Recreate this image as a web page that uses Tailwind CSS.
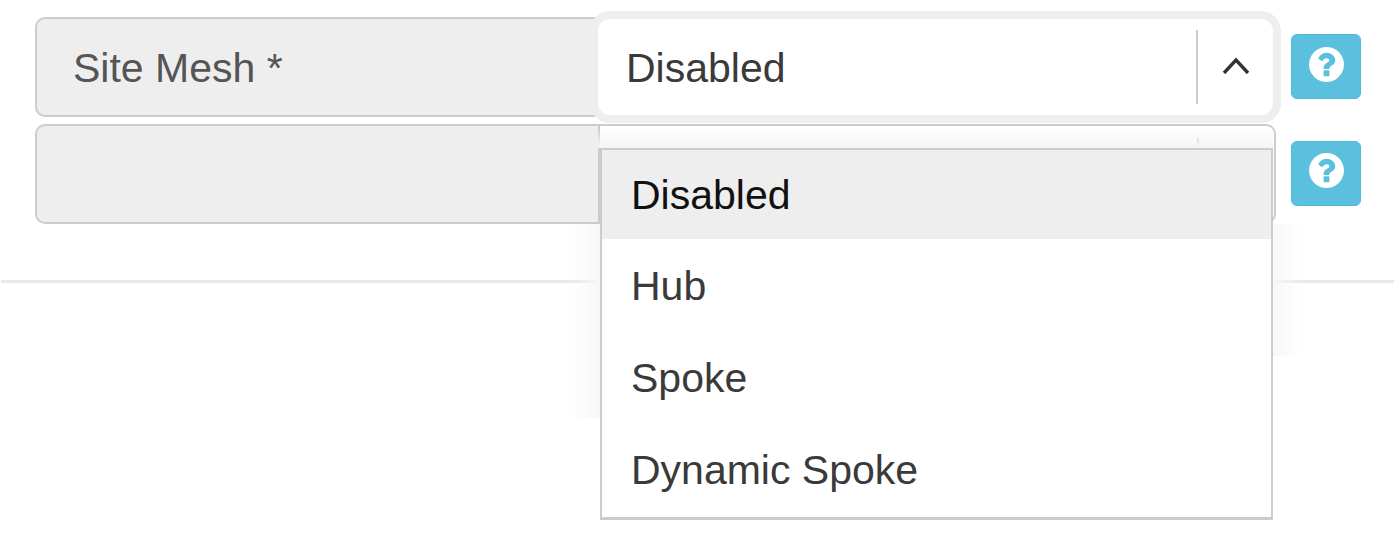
<!DOCTYPE html>
<html lang="en">
<head>
    <meta charset="UTF-8">
    <title>Site Mesh</title>
    <script src="https://cdn.jsdelivr.net/npm/@tailwindcss/browser@4"></script>
</head>
<body class="bg-white h-[556px] overflow-hidden font-['Liberation_Sans',Arial,sans-serif]">
    <div class="relative h-[556px]">
        <div class="pl-[35px] pt-[17px] flex flex-col gap-[7px]">
            <!-- site mesh row, select is focused -->
            <div class="flex items-start">
                <div class="w-[566px] h-[100px] shrink-0 bg-[#eeeeee] border-2 border-[#cccccc] rounded-l-[10px] pl-[36px] pt-[4px] flex items-center text-[41px] text-[#555555]">Site Mesh *</div>
                <div class="relative z-10 -ml-[3px] mt-[2px] w-[675px] h-[96px] shrink-0 bg-white rounded-[12px] ring-[8px] ring-[#eeeeee] flex items-center">
                    <span class="pl-[28px] pt-[4px] flex-1 text-[41px] text-[#3a3a3a]">Disabled</span>
                    <div class="w-[77px] h-[74px] -mt-[1px] pl-[1px] border-l-2 border-[#cccccc] flex items-center justify-center">
                        <svg class="w-[28px] h-[17px] -mt-[3px]" viewBox="0 0 28 17" fill="none" stroke="#333333" stroke-width="3.4"><path d="M2 16 L14 3 L26 16"/></svg>
                    </div>
                </div>
                <button class="ml-[18px] mt-[17px] w-[70px] h-[65px] bg-[#5bc0de] border border-[#4fb9d9] rounded-[6px] flex justify-center pt-[12px]">
                    <svg class="w-[35px] h-[35px]" viewBox="128 128 1536 1536" fill="#ffffff"><path d="M1024 1376v-192q0-14-9-23t-23-9h-192q-14 0-23 9t-9 23v192q0 14 9 23t23 9h192q14 0 23-9t9-23zm256-672q0-88-55.5-163t-138.5-116-170-41q-243 0-371 213-15 24 8 42l132 100q7 6 19 6 16 0 25-12 53-68 86-92 34-24 86-24 48 0 85.5 26t37.5 59q0 38-20 61t-68 45q-63 28-115.5 86.5t-52.5 125.5v36q0 14 9 23t23 9h192q14 0 23-9t9-23q0-19 21.5-49.5t54.5-49.5q32-18 49-28.5t46-35 44.5-48 28-60.5 12.5-81zm384 192q0 209-103 385.5t-279.5 279.5-385.5 103-385.5-103-279.5-279.5-103-385.5 103-385.5 279.5-279.5 385.5-103 385.5 103 279.5 279.5 103 385.5z"/></svg>
                </button>
            </div>
            <!-- second row, mostly covered by the menu -->
            <div class="flex items-start">
                <div class="w-[563px] h-[100px] shrink-0 bg-[#eeeeee] border-2 border-[#cccccc] border-r-0 rounded-l-[10px]"></div>
                <div class="w-[678px] h-[100px] shrink-0 bg-white border-2 border-[#cccccc] rounded-r-[10px] flex justify-end pt-[12px]">
                    <div class="w-[77px] h-[74px] border-l-2 border-[#cccccc]"></div>
                </div>
                <button class="ml-[15px] mt-[17px] w-[70px] h-[65px] bg-[#5bc0de] border border-[#4fb9d9] rounded-[6px] flex justify-center pt-[11px]">
                    <svg class="w-[35px] h-[35px]" viewBox="128 128 1536 1536" fill="#ffffff"><path d="M1024 1376v-192q0-14-9-23t-23-9h-192q-14 0-23 9t-9 23v192q0 14 9 23t23 9h192q14 0 23-9t9-23zm256-672q0-88-55.5-163t-138.5-116-170-41q-243 0-371 213-15 24 8 42l132 100q7 6 19 6 16 0 25-12 53-68 86-92 34-24 86-24 48 0 85.5 26t37.5 59q0 38-20 61t-68 45q-63 28-115.5 86.5t-52.5 125.5v36q0 14 9 23t23 9h192q14 0 23-9t9-23q0-19 21.5-49.5t54.5-49.5q32-18 49-28.5t46-35 44.5-48 28-60.5 12.5-81zm384 192q0 209-103 385.5t-279.5 279.5-385.5 103-385.5-103-279.5-279.5-103-385.5 103-385.5 279.5-279.5 385.5-103 385.5 103 279.5 279.5 103 385.5z"/></svg>
                </button>
            </div>
        </div>
        <div class="mt-[56px] ml-[1px] w-[1393px] h-[3px] bg-[#e9e9e9]"></div>

        <!-- faint menu shadow, cut off square like the reference -->
        <div class="absolute left-[572px] top-[224px] w-[28px] h-[194px] bg-gradient-to-l from-[#f7f7f7] to-white/0"></div>
        <div class="absolute left-[1272px] top-[224px] w-[30px] h-[132px] bg-gradient-to-r from-[#f7f7f7] to-white/0"></div>
        <div class="absolute left-[598px] top-[128px] w-[675px] h-[20px] bg-gradient-to-t from-[#f5f5f5] to-white/0"></div>

        <!-- open menu -->
        <ul class="absolute z-20 left-[600px] top-[148px] w-[673px] h-[372px] bg-white border-2 border-[#cccccc] border-b-[3px] text-[41px] text-[#3a3a3a]">
            <li class="h-[89px] bg-[#eeeeee] text-[#111111] pl-[29px] pt-[2px] flex items-center">Disabled</li>
            <li class="h-[92px] pl-[29px] pt-[4px] flex items-center">Hub</li>
            <li class="h-[92px] pl-[29px] pt-[4px] flex items-center">Spoke</li>
            <li class="h-[92px] pl-[29px] pt-[4px] flex items-center">Dynamic Spoke</li>
        </ul>
    </div>
</body>
</html>
